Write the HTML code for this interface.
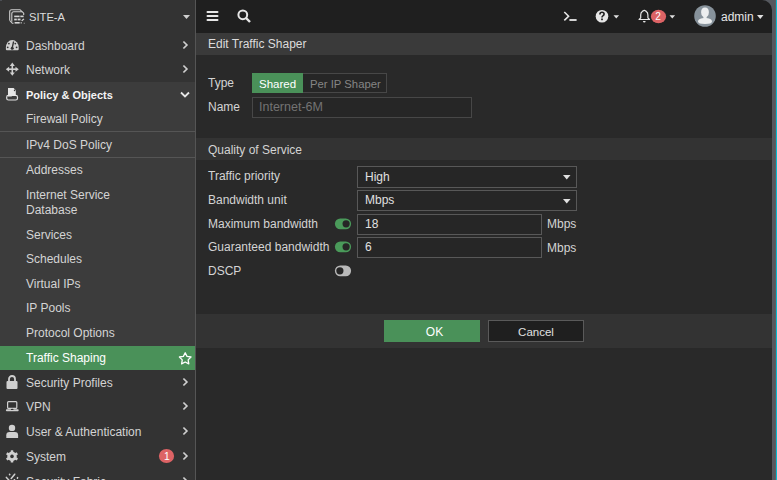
<!DOCTYPE html>
<html><head><meta charset="utf-8">
<style>
*{box-sizing:border-box;margin:0;padding:0}
html,body{width:777px;height:480px;overflow:hidden;background:#292929;font-family:"Liberation Sans",sans-serif;font-size:12px;color:#d6d6d6}
.abs{position:absolute}
#side{position:absolute;left:0;top:0;width:195px;height:480px;background:#333333}
#sep{position:absolute;left:195px;top:0;width:1px;height:480px;background:#555555}
#polsec{position:absolute;left:0;top:82px;width:195px;height:264px;background:#3c3c3c}
.si{position:absolute;left:26px;white-space:nowrap;line-height:16px;color:#d4d4d4}
.hr{position:absolute;left:0;width:195px;height:1px;background:#555}
.chev{position:absolute;left:181px;width:8px;height:10px}
#main{position:absolute;left:196px;top:0;width:576px;height:480px;background:#292929}
#hdr{position:absolute;left:196px;top:0;width:576px;height:33px;background:#1f1f1f;border-top-right-radius:10px}
#title{position:absolute;left:196px;top:33px;width:576px;height:22px;background:#3a3a3a}
.lbl{position:absolute;left:208px;white-space:nowrap;line-height:16px;color:#d4d4d4;font-size:12px}
.inp{position:absolute;border:1px solid #585858;background:#262626}
.tog{position:absolute;left:335px;width:16px;height:11px;border-radius:6px;background:#4a9a5a}
.tog i{position:absolute;top:2px;left:8px;width:7px;height:7px;border-radius:50%;background:#262626}
.tog.off{background:#b4b4b4}
.tog.off i{left:1px}
</style></head><body>
<div id="side"></div>
<div id="polsec"></div>
<div id="sep"></div>

<!-- sidebar header -->
<svg class="abs" style="left:0;top:0" width="30" height="30" viewBox="0 0 30 30">
  <g fill="none" stroke="#d0d0d0" stroke-width="1.1">
    <path d="M9.7 20.5 V11.7 Q9.7 9.7 11.7 9.7 H20 L23.7 13.2 V15"/>
    <path d="M11.8 21.8 V13.8 Q11.8 11.8 13.8 11.8 H22.3"/>
    <path d="M9.7 20.5 L12.3 23.3 H13.5"/>
  </g>
  <g fill="#d4d4d4">
    <rect x="14.2" y="15.6" width="5.4" height="1.6"/><rect x="20.3" y="15.6" width="3.3" height="1.6"/>
    <rect x="14.2" y="18.6" width="2.6" height="1.8"/><rect x="17.6" y="18.6" width="2.9" height="1.8"/>
    <path d="M21.2 20.4 L23.4 18.4 L24.4 19.2 L22.2 21.2z"/>
    <rect x="14.6" y="22" width="5.1" height="1.6"/><rect x="20.7" y="22" width="0.9" height="1.6"/>
    <rect x="23.8" y="22.8" width="0.8" height="0.8"/>
  </g>
</svg>
<div class="si" style="left:29px;top:9px;font-size:11.2px;color:#dcdcdc">SITE-A</div>
<svg class="abs" style="left:183px;top:15px" width="7" height="4"><path d="M0 0h7L3.5 4z" fill="#cfcfcf"/></svg>

<!-- Dashboard -->
<svg class="abs" style="left:0;top:34px" width="24" height="24" viewBox="0 0 24 24">
  <path d="M5.9 13.5 A6.4 7.5 0 0 1 18.7 13.5 V15.3 Q18.7 16.3 17.7 16.3 H6.9 Q5.9 16.3 5.9 15.3z" fill="#d0d0d0"/>
  <g fill="#333"><circle cx="8.9" cy="9.6" r="0.9"/><circle cx="15.3" cy="9.6" r="0.9"/><circle cx="7.7" cy="13.3" r="0.9"/><circle cx="16.6" cy="13.3" r="0.9"/>
  <circle cx="12.2" cy="14.2" r="1.5"/></g>
  <path d="M12.2 14 L13.6 7.5" stroke="#333" stroke-width="1.3"/>
</svg>
<div class="si" style="top:38px">Dashboard</div>
<svg class="chev" style="top:40px" viewBox="0 0 8 10"><path d="M2.4 1.5 L5.9 5 L2.4 8.5" fill="none" stroke="#cfcfcf" stroke-width="1.7"/></svg>

<!-- Network -->
<svg class="abs" style="left:0;top:58px" width="24" height="24" viewBox="0 0 24 24">
  <g fill="#d0d0d0">
  <path d="M12.3 4.6 L14.8 7.9 H9.8z"/><path d="M12.3 17.8 L14.8 14.5 H9.8z"/>
  <path d="M5.8 11.2 L9.1 8.7 V13.7z"/><path d="M18.8 11.2 L15.5 8.7 V13.7z"/>
  <rect x="8" y="10.4" width="8.6" height="1.6"/><rect x="11.5" y="7" width="1.6" height="8.5"/>
  </g>
</svg>
<div class="si" style="top:62px">Network</div>
<svg class="chev" style="top:64px" viewBox="0 0 8 10"><path d="M2.4 1.5 L5.9 5 L2.4 8.5" fill="none" stroke="#cfcfcf" stroke-width="1.7"/></svg>

<!-- Policy & Objects -->
<svg class="abs" style="left:0;top:83px" width="24" height="24" viewBox="0 0 24 24">
  <rect x="6.7" y="12.4" width="10.8" height="4.6" rx="1.8" fill="#3c3c3c" stroke="#e0e0e0" stroke-width="1.2"/>
  <path d="M8 5 H13.6 L15.8 7.2 V13 H12.3 L11.3 13.6 H8z" fill="#e6e6e6"/>
  <circle cx="14.6" cy="7.4" r="0.8" fill="#3c3c3c"/>
</svg>
<div class="si" style="top:87px;font-weight:bold;color:#f4f4f4;font-size:11px">Policy &amp; Objects</div>
<svg class="abs" style="left:180px;top:91px" width="10" height="8" viewBox="0 0 10 8"><path d="M1 1.5 L5 5.5 L9 1.5" fill="none" stroke="#e6e6e6" stroke-width="1.8"/></svg>

<div class="si" style="top:111px">Firewall Policy</div>
<div class="hr" style="top:131px"></div>
<div class="si" style="top:137px">IPv4 DoS Policy</div>
<div class="hr" style="top:157px"></div>
<div class="si" style="top:162px">Addresses</div>
<div class="si" style="top:188px;line-height:15px">Internet Service<br>Database</div>
<div class="si" style="top:227px">Services</div>
<div class="si" style="top:251px">Schedules</div>
<div class="si" style="top:276px">Virtual IPs</div>
<div class="si" style="top:300px">IP Pools</div>
<div class="si" style="top:325px">Protocol Options</div>

<div class="abs" style="left:0;top:346px;width:195px;height:24px;background:#4a9159"></div>
<div class="si" style="top:350px;color:#ffffff">Traffic Shaping</div>
<svg class="abs" style="left:172px;top:346px" width="24" height="24" viewBox="0 0 24 24"><path d="M13.20 6.80 L15.02 10.39 L19.00 11.01 L16.15 13.86 L16.79 17.84 L13.20 16.00 L9.61 17.84 L10.25 13.86 L7.40 11.01 L11.38 10.39z" fill="none" stroke="#ffffff" stroke-width="1.3" stroke-linejoin="round"/></svg>

<!-- Security Profiles -->
<svg class="abs" style="left:6px;top:375px" width="12" height="14" viewBox="0 0 12 14">
  <path d="M3 6 V4 A3 3 0 0 1 9 4 V6" fill="none" stroke="#cfcfcf" stroke-width="1.8"/>
  <rect x="0.5" y="6" width="11" height="8" rx="1" fill="#cfcfcf"/>
</svg>
<div class="si" style="top:375px">Security Profiles</div>
<svg class="chev" style="top:377px" viewBox="0 0 8 10"><path d="M2.4 1.5 L5.9 5 L2.4 8.5" fill="none" stroke="#cfcfcf" stroke-width="1.7"/></svg>

<!-- VPN -->
<svg class="abs" style="left:0;top:396px" width="24" height="24" viewBox="0 0 24 24">
  <rect x="7.6" y="5.6" width="9.2" height="6.8" rx="0.9" fill="none" stroke="#d0d0d0" stroke-width="1.2"/>
  <rect x="5.9" y="13.3" width="12.8" height="1.9" rx="0.9" fill="#d0d0d0"/>
  <ellipse cx="12.2" cy="13.4" rx="1.4" ry="0.6" fill="#333"/>
</svg>
<div class="si" style="top:399px">VPN</div>
<svg class="chev" style="top:401px" viewBox="0 0 8 10"><path d="M2.4 1.5 L5.9 5 L2.4 8.5" fill="none" stroke="#cfcfcf" stroke-width="1.7"/></svg>

<!-- User -->
<svg class="abs" style="left:0;top:420px" width="24" height="24" viewBox="0 0 24 24">
  <circle cx="12" cy="7.9" r="3.2" fill="#d0d0d0"/>
  <path d="M6.3 18 V15.2 Q6.3 12 9.5 12 H14.9 Q18.1 12 18.1 15.2 V18z" fill="#d0d0d0"/>
</svg>
<div class="si" style="top:424px">User &amp; Authentication</div>
<svg class="chev" style="top:426px" viewBox="0 0 8 10"><path d="M2.4 1.5 L5.9 5 L2.4 8.5" fill="none" stroke="#cfcfcf" stroke-width="1.7"/></svg>

<!-- System -->
<svg class="abs" style="left:0;top:444px" width="24" height="24" viewBox="0 0 24 24">
  <g fill="#d0d0d0"><circle cx="12" cy="12.4" r="4.7"/>
  <rect x="10.7" y="6.2" width="2.6" height="12.4" rx="0.6"/>
  <rect x="10.7" y="6.2" width="2.6" height="12.4" rx="0.6" transform="rotate(60 12 12.4)"/>
  <rect x="10.7" y="6.2" width="2.6" height="12.4" rx="0.6" transform="rotate(-60 12 12.4)"/></g>
  <circle cx="12" cy="12.4" r="1.8" fill="#333"/>
</svg>
<div class="si" style="top:449px">System</div>
<svg class="abs" style="left:156px;top:446px" width="22" height="20" viewBox="0 0 22 20"><ellipse cx="10.5" cy="10" rx="7.6" ry="7.1" fill="#dd6365"/><text x="10.9" y="14" text-anchor="middle" font-family="Liberation Sans" font-size="10.4" fill="#fff">1</text></svg>
<svg class="chev" style="top:451px" viewBox="0 0 8 10"><path d="M2.4 1.5 L5.9 5 L2.4 8.5" fill="none" stroke="#cfcfcf" stroke-width="1.7"/></svg>

<!-- Security Fabric -->
<svg class="abs" style="left:0;top:468px" width="24" height="12" viewBox="0 0 24 12">
  <g stroke="#d0d0d0" stroke-width="1.5" stroke-linecap="round" fill="none">
  <path d="M6.4 9.4 L9.2 12.4"/><path d="M14.7 6.2 L11.2 10.5"/><path d="M9.5 6.3 L9.8 6.7"/><path d="M17.6 9.6 L17.4 10.2"/><path d="M14.6 12 L14.4 11.7"/>
  </g>
</svg>
<div class="si" style="top:474px">Security Fabric</div>
<svg class="chev" style="top:476px" viewBox="0 0 8 10"><path d="M2.4 1.5 L5.9 5 L2.4 8.5" fill="none" stroke="#cfcfcf" stroke-width="1.7"/></svg>

<!-- ===== MAIN ===== -->
<div id="main"></div>
<div class="abs" style="left:756px;top:0;width:16px;height:16px;background:#55585e"></div>
<div id="hdr"></div>
<!-- hamburger -->
<svg class="abs" style="left:206px;top:10px" width="13" height="13" viewBox="0 0 13 13">
  <g stroke="#e6e6e6" stroke-width="2" stroke-linecap="round"><path d="M1.5 2 H11.5 M1.5 6 H11.5 M1.5 10 H11.5"/></g>
</svg>
<!-- search -->
<svg class="abs" style="left:236px;top:8px" width="16" height="16" viewBox="0 0 16 16">
  <circle cx="6.8" cy="6.8" r="4.4" fill="none" stroke="#e6e6e6" stroke-width="2"/>
  <path d="M10 10 L14 14" stroke="#e6e6e6" stroke-width="2.4"/>
</svg>
<!-- terminal -->
<svg class="abs" style="left:556px;top:0" width="30" height="30" viewBox="0 0 30 30">
  <path d="M8.3 12 L12.6 16.2 L8.3 20.4" fill="none" stroke="#e6e6e6" stroke-width="1.6"/>
  <rect x="13.4" y="19.1" width="7.2" height="1.8" fill="#e6e6e6"/>
</svg>
<!-- help -->
<svg class="abs" style="left:590px;top:4px" width="24" height="24" viewBox="0 0 24 24">
  <circle cx="12" cy="12.2" r="6.3" fill="#e6e6e6"/>
  <path d="M9.9 10.4 Q9.9 8.3 12 8.3 Q14.1 8.3 14.1 10.1 Q14.1 11.2 12.9 11.9 Q12 12.4 12 13.4" fill="none" stroke="#1f1f1f" stroke-width="1.6"/>
  <rect x="11.15" y="14.5" width="1.7" height="1.7" fill="#1f1f1f"/>
</svg>
<svg class="abs" style="left:613px;top:15px" width="7" height="4" viewBox="0 0 7 4"><path d="M0.5 0.2h5.6L3.3 3.6z" fill="#e0e0e0"/></svg>
<!-- bell -->
<svg class="abs" style="left:632px;top:4px" width="24" height="24" viewBox="0 0 24 24">
  <path d="M12.3 6.3 L14.3 7.4 Q15.9 8.4 15.9 11 V13.8 L17.5 15.5 H7.1 L8.7 13.8 V11 Q8.7 8.4 10.3 7.4z" fill="none" stroke="#e6e6e6" stroke-width="1.2" stroke-linejoin="round"/>
  <path d="M10.9 16.9 H13.7 Q13.5 18.5 12.3 18.5 Q11.1 18.5 10.9 16.9z" fill="#e6e6e6"/>
</svg>
<svg class="abs" style="left:648px;top:6px" width="22" height="22" viewBox="0 0 22 22"><ellipse cx="10.5" cy="10.5" rx="7.6" ry="6.7" fill="#dd6365"/><text x="10.1" y="14.0" text-anchor="middle" font-family="Liberation Sans" font-size="10.1" fill="#fff">2</text></svg>
<svg class="abs" style="left:669px;top:15px" width="7" height="4" viewBox="0 0 7 4"><path d="M0.5 0.2h5.6L3.3 3.6z" fill="#e0e0e0"/></svg>
<!-- avatar -->
<svg class="abs" style="left:694px;top:5px" width="22" height="22" viewBox="0 0 22 22">
  <circle cx="11" cy="11" r="10.8" fill="#87929b"/>
  <path d="M7.1 7.2 Q7.1 2.5 11 2.5 Q14.9 2.5 14.9 7.2 Q14.9 10.2 13.2 11.6 Q12.3 12.4 11 12.4 Q9.7 12.4 8.8 11.6 Q7.1 10.2 7.1 7.2z" fill="#eceeef"/>
  <rect x="9.4" y="11" width="3.2" height="3" fill="#eceeef"/><path d="M4 16.5 Q4 13.2 11 13.1 Q18 13.2 18 16.5 Q18 19 11 19 Q4 19 4 16.5z" fill="#eceeef"/>
</svg>
<div class="abs" style="left:721px;top:9px;line-height:16px;font-size:12px;color:#e6e6e6">admin</div>
<svg class="abs" style="left:757px;top:15px" width="7" height="4"><path d="M0 0h6.5L3.25 4z" fill="#e0e0e0"/></svg>

<div id="title"></div>
<div class="lbl" style="top:36px;color:#dcdcdc">Edit Traffic Shaper</div>

<div class="lbl" style="top:75px">Type</div>
<div class="abs" style="left:252px;top:73px;width:51px;height:20px;background:#4a9159"></div>
<div class="abs" style="left:259px;top:76px;line-height:16px;font-size:11.5px;color:#fff">Shared</div>
<div class="abs" style="left:303px;top:73px;width:84px;height:20px;border:1px solid #474747;border-left:none;background:#262626"></div>
<div class="abs" style="left:310px;top:76px;line-height:16px;font-size:11.3px;color:#858585">Per IP Shaper</div>

<div class="lbl" style="top:99px">Name</div>
<div class="inp" style="left:252px;top:97px;width:220px;height:21px;border-color:#474747"></div>
<div class="abs" style="left:259px;top:99px;line-height:16px;font-size:12.5px;color:#737373">Internet-6M</div>

<div class="abs" style="left:196px;top:138px;width:576px;height:22px;background:#333333"></div>
<div class="lbl" style="top:142px">Quality of Service</div>

<div class="lbl" style="top:168px">Traffic priority</div>
<div class="inp" style="left:357px;top:166px;width:220px;height:22px"></div>
<div class="abs" style="left:365px;top:169px;line-height:16px;font-size:12px;color:#e0e0e0">High</div>
<svg class="abs" style="left:563px;top:175px" width="8" height="5"><path d="M0 0h7.5L3.75 4.5z" fill="#e0e0e0"/></svg>

<div class="lbl" style="top:192px">Bandwidth unit</div>
<div class="inp" style="left:357px;top:190px;width:220px;height:21px"></div>
<div class="abs" style="left:365px;top:192px;line-height:16px;font-size:12px;color:#e0e0e0">Mbps</div>
<svg class="abs" style="left:563px;top:199px" width="8" height="5"><path d="M0 0h7.5L3.75 4.5z" fill="#e0e0e0"/></svg>

<div class="lbl" style="top:216px">Maximum bandwidth</div>
<svg class="abs" style="left:330px;top:216px" width="26" height="16" viewBox="0 0 26 16"><rect x="4.9" y="2.50" width="16.2" height="10.7" rx="5.35" fill="#4a9a5a"/><circle cx="16.1" cy="7.85" r="3.6" fill="#262626"/></svg>
<div class="inp" style="left:357px;top:214px;width:185px;height:21px"></div>
<div class="abs" style="left:365px;top:216px;line-height:16px;font-size:12px;color:#e0e0e0">18</div>
<div class="abs" style="left:547px;top:216px;line-height:16px;font-size:12px;color:#d4d4d4">Mbps</div>

<div class="lbl" style="top:239px">Guaranteed bandwidth</div>
<svg class="abs" style="left:330px;top:239px" width="26" height="16" viewBox="0 0 26 16"><rect x="4.9" y="2.50" width="16.2" height="10.7" rx="5.35" fill="#4a9a5a"/><circle cx="16.1" cy="7.85" r="3.6" fill="#262626"/></svg>
<div class="inp" style="left:357px;top:237px;width:185px;height:21px"></div>
<div class="abs" style="left:365px;top:239px;line-height:16px;font-size:12px;color:#e0e0e0">6</div>
<div class="abs" style="left:547px;top:240px;line-height:16px;font-size:12px;color:#d4d4d4">Mbps</div>

<div class="lbl" style="top:263px">DSCP</div>
<svg class="abs" style="left:330px;top:263px" width="26" height="16" viewBox="0 0 26 16"><rect x="4.9" y="2.50" width="16.2" height="10.7" rx="5.35" fill="#b9b9b9"/><circle cx="9.9" cy="7.85" r="3.6" fill="#262626"/></svg>

<div class="abs" style="left:196px;top:314px;width:576px;height:34px;background:#333333"></div>
<div class="abs" style="left:384px;top:320px;width:96px;height:22px;background:#4a9159;color:#fff;text-align:center;line-height:24px;padding-left:5px;font-size:12px">OK</div>
<div class="abs" style="left:488px;top:320px;width:96px;height:22px;background:#1f1f1f;border:1px solid #5a5a5a;color:#e0e0e0;text-align:center;line-height:22px;font-size:11.5px">Cancel</div>

<div class="abs" style="left:0;top:0;width:2px;height:1px;background:#4b4e54"></div>
<!-- right scrollbar strip -->
<div class="abs" style="left:772px;top:0;width:3px;height:480px;background:#55585e"></div>
<div class="abs" style="left:775px;top:0;width:1px;height:480px;background:#665b5e"></div>
<div class="abs" style="left:776px;top:0;width:1px;height:480px;background:#00bcd2"></div>
</body></html>
